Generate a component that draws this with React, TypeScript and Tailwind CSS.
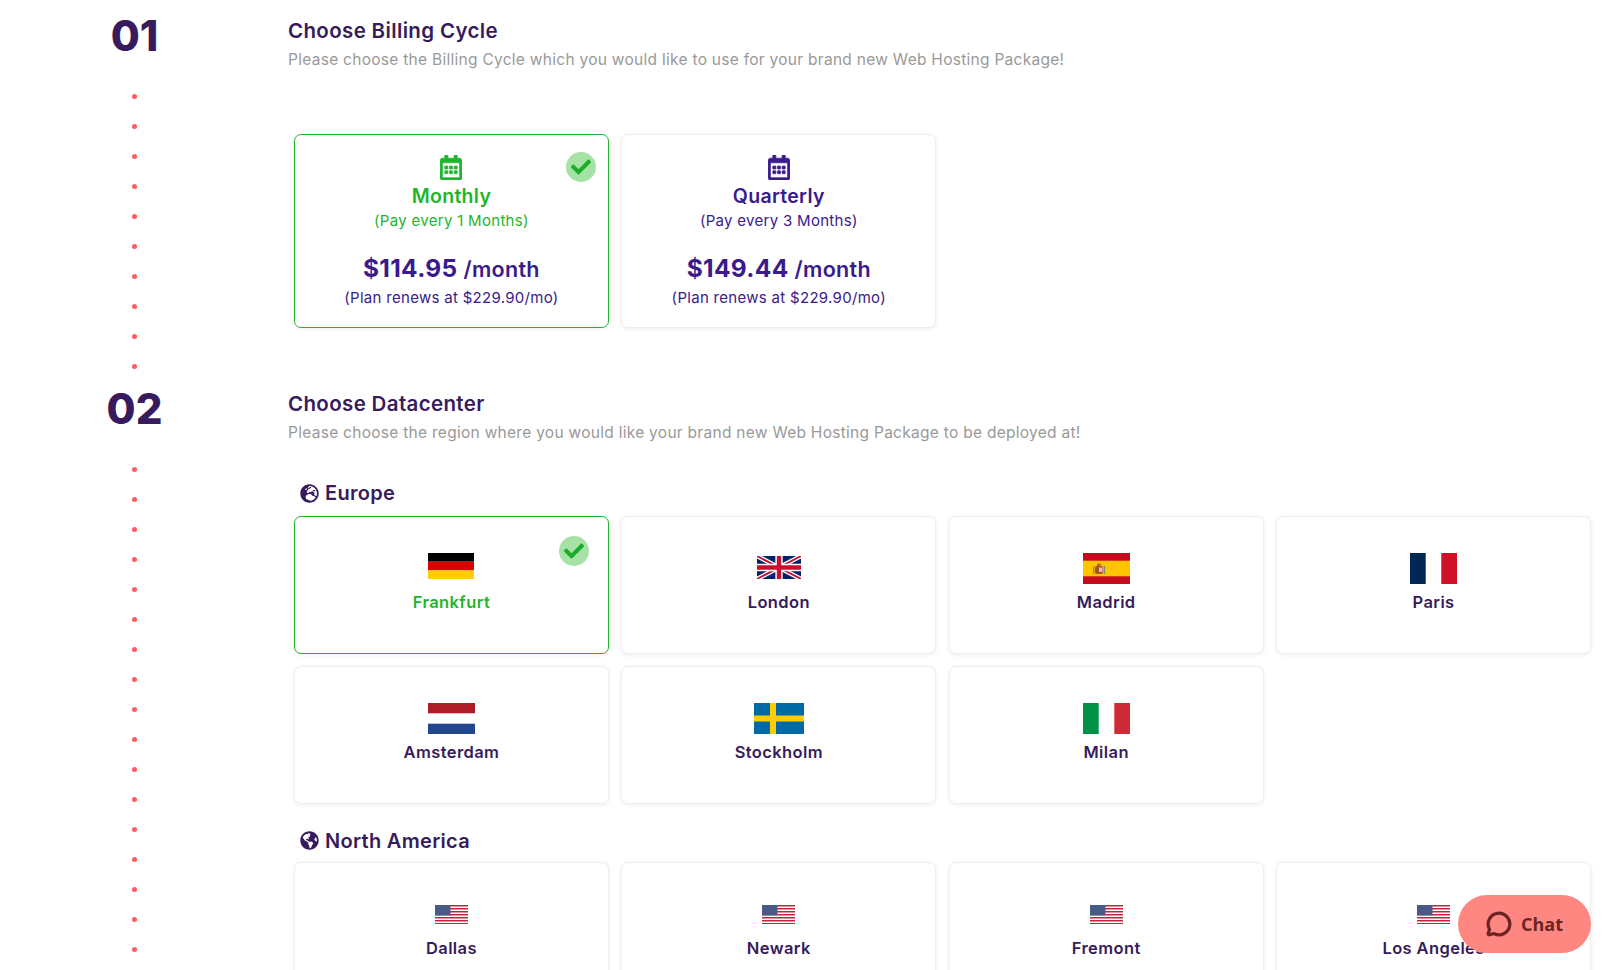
import React from "react";
import { FaRegCalendarAlt, FaCheck, FaGlobeEurope, FaGlobeAmericas } from "react-icons/fa";
import { MessageCircle } from "lucide-react";

const Check = ({ pos }: { pos: string }) => (
  <span className={`absolute ${pos} flex h-[30px] w-[30px] items-center justify-center rounded-full bg-[#a6e2a6]`}>
    <FaCheck className="h-[20px] w-[20px] text-[#1aae28]" />
  </span>
);

const Dots = ({ n, mt }: { n: number; mt: string }) => (
  <div className={`${mt} flex flex-col items-center gap-[25px]`}>
    {Array.from({ length: n }).map((_, i) => (
      <span key={i} className="h-[5px] w-[5px] rounded-full bg-[#ff5a5f]" />
    ))}
  </div>
);

const Germany = () => (
  <svg width="46" height="26" viewBox="0 0 46 26" className="mt-[1px]">
    <rect width="46" height="8.7" fill="#000" />
    <rect y="8.7" width="46" height="8.7" fill="#dd0000" />
    <rect y="17.4" width="46" height="8.6" fill="#ffce00" />
  </svg>
);

const UK = () => (
  <svg width="44" height="23" viewBox="0 0 60 30" preserveAspectRatio="none" className="mt-[4px]">
    <rect width="60" height="30" fill="#012169" />
    <path d="M0 0L60 30M60 0L0 30" stroke="#fff" strokeWidth="6" />
    <path d="M0 0L60 30M60 0L0 30" stroke="#c8102e" strokeWidth="2.4" />
    <path d="M30 0V30M0 15H60" stroke="#fff" strokeWidth="10" />
    <path d="M30 0V30M0 15H60" stroke="#c8102e" strokeWidth="6" />
  </svg>
);

const Spain = () => (
  <svg width="47" height="31" viewBox="0 0 47 31" className="mt-[1px]">
    <rect width="47" height="31" fill="#c60b1e" />
    <rect y="7.7" width="47" height="15.6" fill="#ffc400" />
    <rect x="12" y="13" width="8" height="8" rx="2" fill="#ad4f2c" />
    <rect x="14" y="10.5" width="4" height="2.5" fill="#b5702c" />
    <rect x="16" y="14.5" width="3.5" height="4.5" fill="#e8b9c8" />
    <rect x="10" y="13" width="1.3" height="8" fill="#7d8f5a" />
    <rect x="20.7" y="13" width="1.3" height="8" fill="#7d8f5a" />
  </svg>
);

const France = () => (
  <svg width="47" height="31" viewBox="0 0 47 31" className="mt-[1px]">
    <rect width="15.7" height="31" fill="#002654" />
    <rect x="31.3" width="15.7" height="31" fill="#ce1126" />
  </svg>
);

const Netherlands = () => (
  <svg width="47" height="31" viewBox="0 0 47 31" className="mt-[1px]">
    <rect width="47" height="10.3" fill="#ae1c28" />
    <rect y="20.7" width="47" height="10.3" fill="#21468b" />
  </svg>
);

const Sweden = () => (
  <svg width="50" height="31" viewBox="0 0 50 31" className="mt-[1px]">
    <rect width="50" height="31" fill="#006aa7" />
    <rect x="16" width="6" height="31" fill="#fecc00" />
    <rect y="12.5" width="50" height="6" fill="#fecc00" />
  </svg>
);

const Italy = () => (
  <svg width="47" height="31" viewBox="0 0 47 31" className="mt-[1px]">
    <rect width="15.7" height="31" fill="#009246" />
    <rect x="31.3" width="15.7" height="31" fill="#ce2b37" />
  </svg>
);

const USA = () => (
  <svg width="33" height="19" viewBox="0 0 33 19" className="mt-[7px]">
    <rect width="33" height="19" fill="#fff" />
    {[0, 3, 6, 9, 12, 15, 18].map((y) => (
      <rect key={y} y={y} width="33" height="1.5" fill="#c8213c" />
    ))}
    <rect width="15.5" height="10.3" fill="#4a5a86" />
  </svg>
);

const City = ({ name, flag, selected }: { name: string; flag: React.ReactNode; selected?: boolean }) => (
  <div
    className={`relative flex h-[137.5px] flex-col items-center rounded-[7px] border bg-white pt-[34.5px] shadow-[0_1px_4px_rgba(60,30,80,0.08)] ${
      selected ? "border-[#22b52c]" : "border-[#f2ebf0]"
    }`}
  >
    <div className="flex h-[33px] items-start justify-center">{flag}</div>
    <div
      className={`mt-[6px] text-[16.5px] leading-[22px] font-semibold tracking-[0.4px] ${
        selected ? "text-[#1fb52a]" : "text-[#371b5c]"
      }`}
    >
      {name}
    </div>
    {selected && <Check pos="right-[19px] top-[19px]" />}
  </div>
);

const Billing = ({
  name,
  sub,
  price,
  selected,
}: {
  name: string;
  sub: string;
  price: string;
  selected?: boolean;
}) => {
  const tone = selected ? "text-[#1fb52a]" : "text-[#3a1a8c]";
  return (
    <div
      className={`relative flex h-[194px] flex-col items-center rounded-[7px] border bg-white pt-[20px] shadow-[0_1px_4px_rgba(60,30,80,0.08)] ${
        selected ? "border-[#22b52c]" : "border-[#f2ebf0]"
      }`}
    >
      <FaRegCalendarAlt className={`h-[25px] w-[22px] [stroke-width:14] ${tone}`} />
      <div className={`mt-[3px] text-[19.5px] leading-[26px] font-semibold tracking-[0.3px] ${tone}`}>{name}</div>
      <div className={`mt-[2px] text-[15px] leading-[20px] tracking-[0.3px] ${tone}`}>{sub}</div>
      <div className="mt-[20px] flex items-baseline gap-[6px] leading-[34px] tracking-[0.3px] text-[#3a1a8c]">
        <span className="text-[24.5px] font-bold">{price}</span>
        <span className="text-[21.5px] font-semibold">/month</span>
      </div>
      <div className="mt-[2px] text-[15px] leading-[20px] tracking-[0.3px] text-[#3a1a8c]">
        (Plan renews at $229.90/mo)
      </div>
      {selected && <Check pos="right-[12px] top-[17px]" />}
    </div>
  );
};

const Region = ({ icon, name }: { icon: React.ReactNode; name: string }) => (
  <div className="flex h-[28px] items-center gap-[6px] pl-[12px] text-[20px] font-semibold tracking-[0.3px] text-[#371b5c]">
    {icon}
    <span>{name}</span>
  </div>
);

const Num = ({ v }: { v: string }) => (
  <div className="h-[50px] text-[42px] leading-[50px] font-extrabold text-[#371b5c]">{v}</div>
);

const Head = ({ title, sub }: { title: string; sub: string }) => (
  <div>
    <div className="h-[28px] text-[20.5px] leading-[28px] font-semibold tracking-[0.35px] text-[#371b5c]">{title}</div>
    <div className="mt-[3px] h-[24px] text-[15.5px] leading-[24px] tracking-[0.28px] text-[#999999]">{sub}</div>
  </div>
);

export default function App() {
  return (
    <div className="relative flex h-[970px] overflow-hidden bg-white font-['Inter',sans-serif]">
      <div className="flex w-[269px] shrink-0 flex-col items-center pt-[11px]">
        <Num v="01" />
        <Dots n={10} mt="mt-[33px]" />
        <div className="mt-[14.5px]">
          <Num v="02" />
        </div>
        <Dots n={17} mt="mt-[33.5px]" />
      </div>
      <div className="flex-1 pt-[17px] pl-[19px]">
        <Head
          title="Choose Billing Cycle"
          sub="Please choose the Billing Cycle which you would like to use for your brand new Web Hosting Package!"
        />
        <div className="mt-[62px] ml-[6px] grid w-[1297px] grid-cols-4 gap-[12.5px]">
          <Billing name="Monthly" sub="(Pay every 1 Months)" price="$114.95" selected />
          <Billing name="Quarterly" sub="(Pay every 3 Months)" price="$149.44" />
        </div>
        <div className="mt-[62px]">
          <Head
            title="Choose Datacenter"
            sub="Please choose the region where you would like your brand new Web Hosting Package to be deployed at!"
          />
        </div>
        <div className="mt-[34px]">
          <Region icon={<FaGlobeEurope className="h-[19px] w-[19px]" />} name="Europe" />
        </div>
        <div className="mt-[9px] ml-[6px] grid w-[1297px] grid-cols-4 gap-x-[12.5px] gap-y-[12.5px]">
          <City name="Frankfurt" flag={<Germany />} selected />
          <City name="London" flag={<UK />} />
          <City name="Madrid" flag={<Spain />} />
          <City name="Paris" flag={<France />} />
          <City name="Amsterdam" flag={<Netherlands />} />
          <City name="Stockholm" flag={<Sweden />} />
          <City name="Milan" flag={<Italy />} />
        </div>
        <div className="mt-[23px]">
          <Region icon={<FaGlobeAmericas className="h-[19px] w-[19px]" />} name="North America" />
        </div>
        <div className="mt-[7.5px] ml-[6px] grid w-[1297px] grid-cols-4 gap-[12.5px]">
          <City name="Dallas" flag={<USA />} />
          <City name="Newark" flag={<USA />} />
          <City name="Fremont" flag={<USA />} />
          <City name="Los Angeles" flag={<USA />} />
        </div>
      </div>
      <div className="absolute top-[895px] left-[1458px] flex h-[58px] w-[133px] items-center justify-center gap-[9px] rounded-[29px] bg-[#ff8782] font-['Open_Sans',sans-serif] text-[18px] font-bold text-[#6b2421]">
        <MessageCircle className="h-[26px] w-[26px]" strokeWidth={3} />
        <span>Chat</span>
      </div>
    </div>
  );
}
